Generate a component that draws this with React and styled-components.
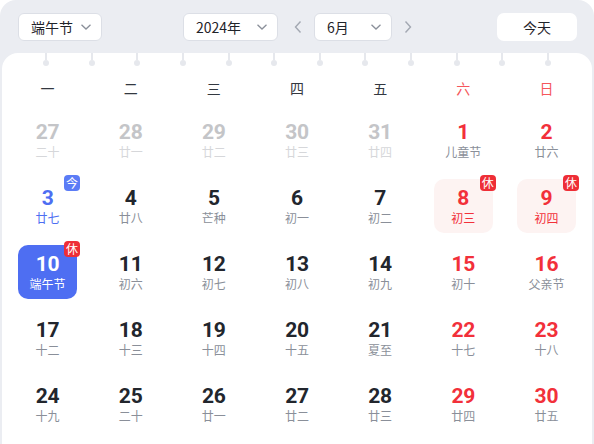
import React from "react";
import styled, { createGlobalStyle } from "styled-components";

const GlobalStyle = createGlobalStyle`
  html, body {
    margin: 0;
    padding: 0;
    background: #ffffff;
    overflow: hidden;
  }
  body {
    font-family: "Noto Sans CJK SC", "Noto Sans", sans-serif;
  }
`;

const Shell = styled.div`
  width: 594px;
  height: 444px;
  box-sizing: border-box;
  background: #ebedf2;
  border-radius: 16px 16px 0 0;
  padding: 0 2px;
  overflow: hidden;
  display: flex;
  flex-direction: column;
`;

const Toolbar = styled.div`
  display: flex;
  align-items: center;
  justify-content: space-between;
  padding: 13px 15px 12px 16px;
`;

const NavGroup = styled.div`
  display: flex;
  align-items: center;
  margin-left: 2px;
`;

const Select = styled.div`
  width: ${(p) => p.$w}px;
  height: 28px;
  box-sizing: border-box;
  background: #fff;
  border: 1px solid #dcdfe6;
  border-radius: 6px;
  display: flex;
  align-items: center;
  justify-content: space-between;
  padding: 0 9px 0 12px;
  font-size: 14px;
  color: #1f2329;
  margin-right: ${(p) => p.$mr || 0}px;
`;

const Arrow = styled.div`
  width: 20px;
  height: 28px;
  display: flex;
  align-items: center;
  justify-content: center;
  margin-right: ${(p) => p.$mr || 0}px;
`;

const TodayButton = styled.div`
  width: 80px;
  height: 28px;
  background: #fff;
  border-radius: 7px;
  display: flex;
  align-items: center;
  justify-content: center;
  font-size: 14px;
  color: #1f2329;
`;

const Panel = styled.div`
  position: relative;
  flex: 1;
  background: #fff;
  border-radius: 16px 16px 0 0;
  padding: 10px 4px 0;
`;

const Rings = styled.div`
  position: absolute;
  top: 0;
  left: 41px;
  right: 41px;
  display: flex;
  justify-content: space-between;
`;

const Ring = styled.div`
  width: 6px;
  display: flex;
  flex-direction: column;
  align-items: center;
  &::before {
    content: "";
    width: 2px;
    height: 7px;
    background: #e6e8ed;
  }
  &::after {
    content: "";
    width: 6px;
    height: 6px;
    border-radius: 50%;
    background: #e6e8ed;
  }
`;

const WeekRow = styled.div`
  display: grid;
  grid-template-columns: repeat(7, 1fr);
  height: 50px;
  align-items: center;
`;

const WeekDay = styled.div`
  text-align: center;
  font-size: 14px;
  color: ${(p) => (p.$weekend ? "#f5575c" : "#333840")};
`;

const Grid = styled.div`
  display: grid;
  grid-template-columns: repeat(7, 1fr);
  grid-auto-rows: 66px;
`;

const CellWrap = styled.div`
  display: flex;
  justify-content: center;
`;

const Cell = styled.div`
  position: relative;
  width: 59px;
  height: 54px;
  box-sizing: border-box;
  border-radius: 10px;
  display: flex;
  flex-direction: column;
  align-items: center;
  justify-content: center;
  background: ${(p) =>
    p.$selected ? "#4e6ef2" : p.$rest ? "#fdf3f2" : "transparent"};
`;

const Num = styled.div`
  font-family: "Roboto", "Liberation Sans", sans-serif;
  font-weight: 700;
  font-size: 21px;
  line-height: 24px;
  letter-spacing: -0.2px;
  color: ${(p) => p.$c};
`;

const Lunar = styled.div`
  font-size: 12px;
  line-height: 16px;
  color: ${(p) => p.$c};
`;

const Badge = styled.div`
  position: absolute;
  top: -4px;
  right: -3px;
  width: 16px;
  height: 16px;
  border-radius: 4px;
  background: ${(p) => (p.$blue ? "#5b7cf6" : "#ee2e36")};
  color: #fff;
  font-size: 12px;
  line-height: 16px;
  text-align: center;
`;

const ChevronDown = () => (
  <svg width="12" height="8" viewBox="0 0 12 8">
    <path d="M1.5 1.8 L6 6 L10.5 1.8" fill="none" stroke="#8b909a" strokeWidth="1.3" />
  </svg>
);

const ChevronSide = ({ dir }) => (
  <svg width="8" height="14" viewBox="0 0 8 14">
    <path
      d={dir === "left" ? "M6.5 1.5 L1.5 7 L6.5 12.5" : "M1.5 1.5 L6.5 7 L1.5 12.5"}
      fill="none"
      stroke="#a3a8b2"
      strokeWidth="1.4"
    />
  </svg>
);

const weekdays = ["一", "二", "三", "四", "五", "六", "日"];

const days = [
  [27, "二十", "o"], [28, "廿一", "o"], [29, "廿二", "o"], [30, "廿三", "o"], [31, "廿四", "o"], [1, "儿童节"], [2, "廿六"],
  [3, "廿七", "today"], [4, "廿八"], [5, "芒种"], [6, "初一"], [7, "初二"], [8, "初三", "rest"], [9, "初四", "rest"],
  [10, "端午节", "sel"], [11, "初六"], [12, "初七"], [13, "初八"], [14, "初九"], [15, "初十"], [16, "父亲节"],
  [17, "十二"], [18, "十三"], [19, "十四"], [20, "十五"], [21, "夏至"], [22, "十七"], [23, "十八"],
  [24, "十九"], [25, "二十"], [26, "廿一"], [27, "廿二"], [28, "廿三"], [29, "廿四"], [30, "廿五"],
];

const Day = ({ n, lunar, kind, weekend }) => {
  let numColor = weekend ? "#f2303a" : "#22262d";
  let lunarColor = "#8a8f99";
  if (kind === "o") {
    numColor = "#c4c5c8";
    lunarColor = "#d6d7da";
  }
  if (kind === "today") {
    numColor = "#4e6ef2";
    lunarColor = "#4e6ef2";
  }
  if (kind === "rest") {
    numColor = "#f2303a";
    lunarColor = "#f2303a";
  }
  if (kind === "sel") {
    numColor = "#fff";
    lunarColor = "#fff";
  }
  return (
    <CellWrap>
      <Cell $selected={kind === "sel"} $rest={kind === "rest"}>
        <Num $c={numColor}>{n}</Num>
        <Lunar $c={lunarColor}>{lunar}</Lunar>
        {kind === "today" && <Badge $blue>今</Badge>}
        {(kind === "rest" || kind === "sel") && <Badge>休</Badge>}
      </Cell>
    </CellWrap>
  );
};

export default function App() {
  return (
    <>
      <GlobalStyle />
      <Shell>
        <Toolbar>
          <Select $w={84}>
            端午节
            <ChevronDown />
          </Select>
          <NavGroup>
            <Select $w={95} $mr={10}>
              2024年
              <ChevronDown />
            </Select>
            <Arrow $mr={6}>
              <ChevronSide dir="left" />
            </Arrow>
            <Select $w={78} $mr={6}>
              6月
              <ChevronDown />
            </Select>
            <Arrow>
              <ChevronSide dir="right" />
            </Arrow>
          </NavGroup>
          <TodayButton>今天</TodayButton>
        </Toolbar>
        <Panel>
          <Rings>
            {Array.from({ length: 12 }).map((_, i) => (
              <Ring key={i} />
            ))}
          </Rings>
          <WeekRow>
            {weekdays.map((w, i) => (
              <WeekDay key={w} $weekend={i >= 5}>
                {w}
              </WeekDay>
            ))}
          </WeekRow>
          <Grid>
            {days.map(([n, lunar, kind], i) => (
              <Day key={i} n={n} lunar={lunar} kind={kind} weekend={i % 7 >= 5} />
            ))}
          </Grid>
        </Panel>
      </Shell>
    </>
  );
}
